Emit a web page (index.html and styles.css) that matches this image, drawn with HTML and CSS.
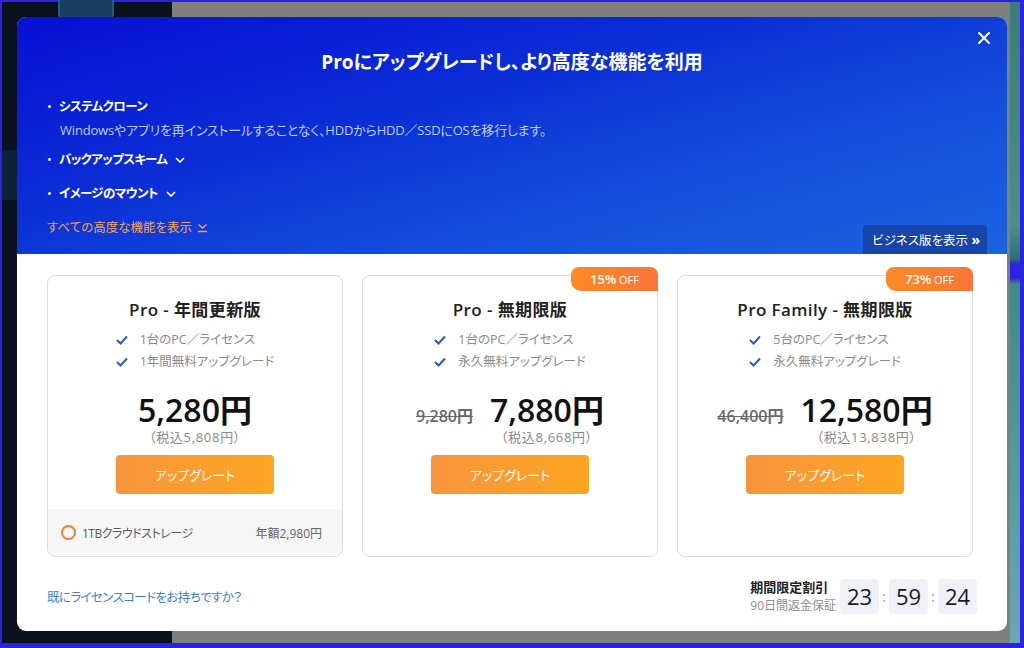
FILE: index.html
```html
<!DOCTYPE html>
<html lang="ja">
<head>
<meta charset="utf-8">
<link rel="stylesheet" href="styles.css">
</head>
<body>
<div class="screen">
  <div class="desk-left">
    <div class="app-icon"></div>
    <div class="band"></div>
  </div>
  <div class="desk-right"></div>
  <div class="edge"></div>

  <div class="modal">
    <button class="close" aria-label="close">
      <svg width="12" height="12" viewBox="0 0 12 12"><path d="M1 1L11 11M11 1L1 11" stroke="#fff" stroke-width="2" stroke-linecap="round"/></svg>
    </button>
    <header class="hero">
      <h1 class="hero-title">Proにアップグレードし、より高度な機能を利用</h1>
      <div class="hero-row">
        <ul class="features">
          <li class="feature">
            <div class="feature-name"><span class="dot">•</span>システムクローン</div>
            <div class="feature-desc">Windowsやアプリを再インストールすることなく、HDDからHDD／SSDにOSを移行します。</div>
          </li>
          <li class="feature gap">
            <div class="feature-name"><span class="dot">•</span>バックアップスキーム
              <svg class="chev" width="10" height="6" viewBox="0 0 10 6"><path d="M1 1l4 4 4-4" fill="none" stroke="#fff" stroke-width="1.6"/></svg></div>
          </li>
          <li class="feature gap2">
            <div class="feature-name"><span class="dot">•</span>イメージのマウント
              <svg class="chev" width="10" height="6" viewBox="0 0 10 6"><path d="M1 1l4 4 4-4" fill="none" stroke="#fff" stroke-width="1.6"/></svg></div>
          </li>
          <li class="show-all">すべての高度な機能を表示
            <svg class="chev" width="11" height="10" viewBox="0 0 11 10"><path d="M1.5 1.5l4 3.5 4-3.5" fill="none" stroke="#f3a455" stroke-width="1.4"/><path d="M1 8.5h9" stroke="#f3a455" stroke-width="1.4"/></svg>
          </li>
        </ul>
        <a class="biz">ビジネス版を表示 <span class="raquo">»</span></a>
      </div>
    </header>

    <main class="plans">
      <section class="card">
        <h2 class="card-title">Pro - 年間更新版</h2>
        <ul class="checks">
          <li><svg class="tick" width="12" height="10" viewBox="0 0 12 10"><path d="M1 5l3.5 3.5L11 1.5" fill="none" stroke="#2a5ab5" stroke-width="2"/></svg>1台のPC／ライセンス</li>
          <li><svg class="tick" width="12" height="10" viewBox="0 0 12 10"><path d="M1 5l3.5 3.5L11 1.5" fill="none" stroke="#2a5ab5" stroke-width="2"/></svg>1年間無料アップグレード</li>
        </ul>
        <div class="price-row">
          <div class="price-col">
            <div class="price">5,280円</div>
            <div class="tax">（税込5,808円）</div>
          </div>
        </div>
        <button class="buy">アップグレート</button>
        <div class="addon">
          <span class="radio"></span>
          <span class="addon-name">1TBクラウドストレージ</span>
          <span class="addon-price">年額2,980円</span>
        </div>
      </section>

      <section class="card">
        <div class="badge"><b>15%</b> OFF</div>
        <h2 class="card-title">Pro - 無期限版</h2>
        <ul class="checks">
          <li><svg class="tick" width="12" height="10" viewBox="0 0 12 10"><path d="M1 5l3.5 3.5L11 1.5" fill="none" stroke="#2a5ab5" stroke-width="2"/></svg>1台のPC／ライセンス</li>
          <li><svg class="tick" width="12" height="10" viewBox="0 0 12 10"><path d="M1 5l3.5 3.5L11 1.5" fill="none" stroke="#2a5ab5" stroke-width="2"/></svg>永久無料アップグレード</li>
        </ul>
        <div class="price-row">
          <s class="old">9,280円</s>
          <div class="price-col">
            <div class="price">7,880円</div>
            <div class="tax">（税込8,668円）</div>
          </div>
        </div>
        <button class="buy">アップグレート</button>
      </section>

      <section class="card">
        <div class="badge"><b>73%</b> OFF</div>
        <h2 class="card-title">Pro Family - 無期限版</h2>
        <ul class="checks">
          <li><svg class="tick" width="12" height="10" viewBox="0 0 12 10"><path d="M1 5l3.5 3.5L11 1.5" fill="none" stroke="#2a5ab5" stroke-width="2"/></svg>5台のPC／ライセンス</li>
          <li><svg class="tick" width="12" height="10" viewBox="0 0 12 10"><path d="M1 5l3.5 3.5L11 1.5" fill="none" stroke="#2a5ab5" stroke-width="2"/></svg>永久無料アップグレード</li>
        </ul>
        <div class="price-row">
          <s class="old">46,400円</s>
          <div class="price-col">
            <div class="price">12,580円</div>
            <div class="tax">（税込13,838円）</div>
          </div>
        </div>
        <button class="buy">アップグレート</button>
      </section>
    </main>

    <footer class="foot">
      <a class="license">既にライセンスコードをお持ちですか？</a>
      <div class="timer">
        <div class="timer-label">
          <div class="t1">期間限定割引</div>
          <div class="t2">90日間返金保証</div>
        </div>
        <span class="tbox">23</span><span class="colon">:</span><span class="tbox">59</span><span class="colon">:</span><span class="tbox">24</span>
      </div>
    </footer>
  </div>
</div>
</body>
</html>
```
FILE: styles.css
```css
* { box-sizing: border-box; margin: 0; padding: 0; }
html, body { width: 1024px; height: 648px; overflow: hidden; }
body {
  font-family: "Open Sans", "Noto Sans CJK JP", sans-serif;
  font-feature-settings: "palt" 1;
  background: #2a22e2;
}
ul { list-style: none; }
button { font-family: inherit; font-feature-settings: "palt" 1; border: none; cursor: pointer; }

.screen {
  position: relative;
  width: 1024px;
  height: 648px;
  border-style: solid;
  border-color: #2b22e4;
  border-width: 2px 4px 5px 2px;
  display: flex;
}
.desk-left {
  width: 170px;
  background: #0a111d;
  display: flex;
  flex-direction: column;
}
.app-icon {
  margin: -8px 0 0 56px;
  width: 56px;
  height: 26px;
  border-radius: 6px;
  background: #173e63;
  border: 2px solid #28597f;
}
.band {
  margin-top: 130px;
  height: 50px;
  background: #0d2138;
}
.desk-right { flex: 1; background: #7f7f80; }
.edge {
  width: 10px;
  background: linear-gradient(180deg, #3a7d78 0%, #4c8f86 35%, #2f6f7a 40%, #2a22e4 41%, #2a22e4 43%, #3f8a84 44%, #6aa8b4 100%);
}

/* modal */
.modal {
  position: absolute;
  left: 15px;
  top: 15px;
  width: 990px;
  height: 614px;
  background: #fff;
  border-radius: 9px;
  overflow: hidden;
  display: flex;
  flex-direction: column;
}
.close {
  position: absolute;
  top: 14px;
  right: 16px;
  width: 14px;
  height: 14px;
  background: none;
  display: flex;
  align-items: center;
  justify-content: center;
}
.hero {
  height: 237px;
  background: linear-gradient(165deg, #0710d4 0%, #0b2fd6 40%, #1450dc 70%, #1c62e0 100%);
  padding-top: 31px;
  display: flex;
  flex-direction: column;
  color: #fff;
}
.hero-title {
  font-size: 19px;
  line-height: 28px;
  font-weight: 700;
  text-align: center;
}
.hero-row {
  flex: 1;
  display: flex;
  justify-content: space-between;
  align-items: flex-end;
  padding: 0 20px 0 30px;
}
.features { align-self: stretch; margin-top: 21px; }
.feature-name {
  font-size: 12.5px;
  line-height: 20px;
  font-weight: 700;
  letter-spacing: -0.6px;
  display: flex;
  align-items: center;
}
.dot { width: 12px; font-weight: 400; display: inline-block; letter-spacing: 0; }
.feature-desc {
  font-size: 13px;
  line-height: 20px;
  color: #b9cdf6;
  padding-left: 13px;
  margin-top: 3px;
  letter-spacing: -0.2px;
}
.feature.gap { margin-top: 10px; }
.feature.gap2 { margin-top: 14px; }
.chev { margin-left: 8px; }
.show-all {
  margin-top: 14px;
  font-size: 12.5px;
  line-height: 20px;
  color: #f3a455;
  display: flex;
  align-items: center;
}
.show-all .chev { margin-left: 5px; }
.biz {
  background: #1745a9;
  color: #fff;
  font-size: 12.5px;
  line-height: 29px;
  height: 29px;
  padding: 0 7px 0 9px;
  border-radius: 4px 4px 0 0;
}
.raquo { font-weight: 700; font-size: 14px; }

/* plans */
.plans {
  display: grid;
  grid-template-columns: repeat(3, 296px);
  column-gap: 19px;
  padding: 21px 0 0 30px;
}
.card {
  position: relative;
  height: 282px;
  border: 1px solid #dcdcdc;
  border-radius: 8px;
  padding-top: 22px;
  display: flex;
  flex-direction: column;
  align-items: center;
}
.badge {
  position: absolute;
  top: -9px;
  right: -1px;
  width: 87px;
  height: 24px;
  background: linear-gradient(90deg, #fb8a26 0%, #fa7538 100%);
  color: #fff;
  font-size: 11px;
  line-height: 24px;
  text-align: center;
  border-radius: 8px 8px 0 10px;
}
.badge b { font-size: 13px; font-weight: 600; }
.card-title {
  font-size: 17px;
  line-height: 24px;
  font-weight: 600;
  color: #222;
  letter-spacing: 0.4px;
}
.checks { margin-top: 7px; }
.checks li {
  font-size: 12.5px;
  line-height: 22px;
  color: #8a8a8a;
  display: flex;
  align-items: center;
}
.tick { margin-right: 12px; }
.price-row {
  margin-top: 20px;
  display: flex;
  align-items: baseline;
  justify-content: center;
  gap: 17px;
}
.old {
  font-size: 16px;
  color: #6a6a6a;
  font-weight: 600;
}
.price-col { text-align: center; }
.price {
  font-size: 32px;
  line-height: 34px;
  font-weight: 600;
  color: #111;
}
.tax {
  font-size: 13px;
  line-height: 18px;
  margin-top: 1px;
  color: #8a8a8a;
  letter-spacing: 0.7px;
}
.buy {
  margin-top: 9px;
  width: 158px;
  height: 39px;
  border-radius: 4px;
  background: linear-gradient(90deg, #f8943c 0%, #fca622 100%);
  color: #fff;
  font-size: 13px;
}
.addon {
  margin-top: auto;
  align-self: stretch;
  height: 47px;
  background: #f6f6f6;
  border-radius: 0 0 7px 7px;
  display: flex;
  align-items: center;
  padding: 0 20px 0 13px;
  font-size: 12px;
  color: #5a5a5a;
}
.addon-name { letter-spacing: -0.5px; }
.radio {
  width: 15px;
  height: 15px;
  border: 2px solid #ef7d2a;
  border-radius: 50%;
  margin-right: 6px;
}
.addon-price { margin-left: auto; color: #666; }

/* footer */
.foot {
  display: flex;
  justify-content: space-between;
  align-items: center;
  padding: 21px 30px 0 30px;
}
.license {
  color: #3a7fd2;
  font-size: 12.5px;
  letter-spacing: -0.6px;
}
.timer { display: flex; align-items: center; }
.timer-label { margin-right: 4px; }
.t1 { font-size: 13px; font-weight: 700; color: #222; line-height: 19px; }
.t2 { font-size: 12px; color: #8f8f8f; line-height: 17px; }
.tbox {
  width: 39px;
  height: 35px;
  background: #eef2f8;
  border-radius: 4px;
  font-size: 22px;
  line-height: 35px;
  text-align: center;
  color: #1a1a1a;
}
.colon {
  width: 10px;
  text-align: center;
  color: #9a9a9a;
  font-size: 14px;
}
```
